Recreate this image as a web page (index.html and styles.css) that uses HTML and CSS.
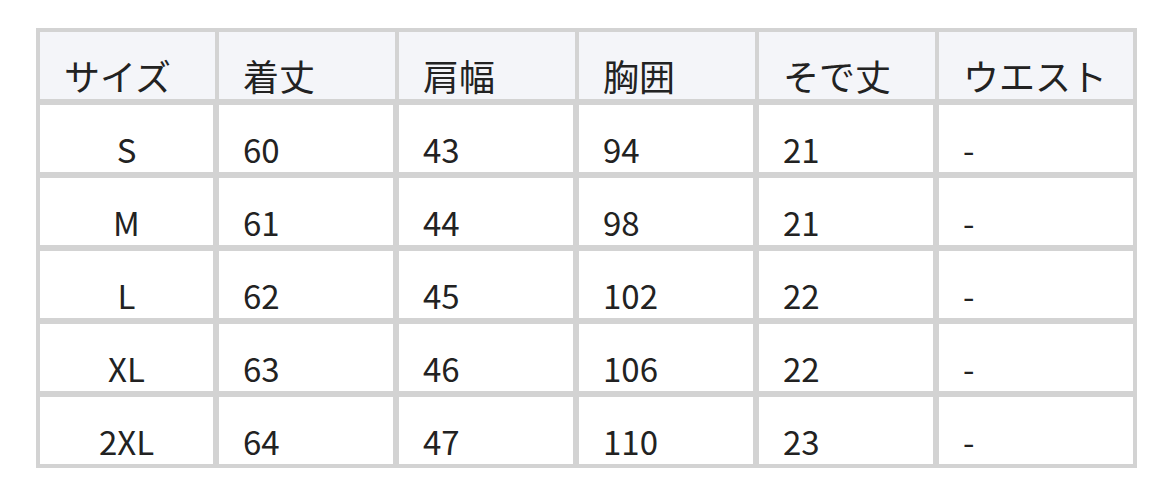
FILE: index.html
```html
<!DOCTYPE html>
<html lang="ja">
<head>
<meta charset="utf-8">
<link rel="stylesheet" href="styles.css">
</head>
<body>
<table class="size-table">
  <colgroup>
    <col class="c1"><col class="c"><col class="c"><col class="c"><col class="c"><col class="c6">
  </colgroup>
  <thead>
    <tr><th>サイズ</th><th>着丈</th><th>肩幅</th><th>胸囲</th><th>そで丈</th><th>ウエスト</th></tr>
  </thead>
  <tbody>
    <tr><td class="size">S</td><td>60</td><td>43</td><td>94</td><td>21</td><td>-</td></tr>
    <tr><td class="size">M</td><td>61</td><td>44</td><td>98</td><td>21</td><td>-</td></tr>
    <tr><td class="size">L</td><td>62</td><td>45</td><td>102</td><td>22</td><td>-</td></tr>
    <tr><td class="size">XL</td><td>63</td><td>46</td><td>106</td><td>22</td><td>-</td></tr>
    <tr><td class="size">2XL</td><td>64</td><td>47</td><td>110</td><td>23</td><td>-</td></tr>
  </tbody>
</table>
</body>
</html>
```

FILE: styles.css
```css
html, body {
  margin: 0;
  padding: 0;
  background: #ffffff;
}
body {
  padding: 28px 0 0 36px;
  font-family: "Noto Sans CJK JP", "Noto Sans", sans-serif;
  color: #222222;
}
.size-table {
  border-collapse: separate;
  border-spacing: 0;
  border: 1px solid #d3d3d3;
  table-layout: fixed;
  width: 1101px;
}
.c1 { width: 179px; }
.c { width: 180px; }
.c6 { width: 200px; }
.size-table th,
.size-table td {
  border: 3px solid #d3d3d3;
  height: 67px;
  padding: 0 0 0 24px;
  vertical-align: bottom;
  text-align: left;
  line-height: 46px;
  box-sizing: content-box;
}
.size-table th {
  background: #f4f5f9;
  font-weight: 400;
  font-size: 36px;
  line-height: 48px;
  border-right-width: 1px;
}
.size-table th:last-child {
  border-right-width: 3px;
}
.size-table td {
  font-size: 33px;
}
.size-table td.size {
  text-align: center;
  padding-left: 0;
}
```
